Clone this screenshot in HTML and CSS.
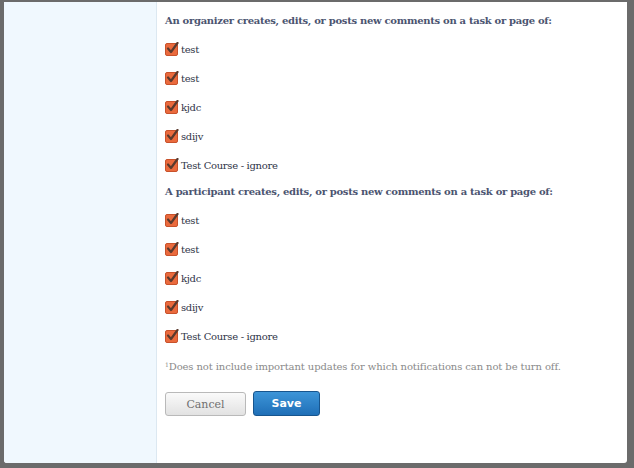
FILE: index.html
```html
<!DOCTYPE html>
<html>
<head>
<meta charset="utf-8">
<link rel="stylesheet" href="styles.css">
</head>
<body>
<div class="frame">
  <aside class="sidebar"></aside>
  <main class="content">
    <h3 class="heading">An organizer creates, edits, or posts new comments on a task or page of:</h3>
    <ul class="list">
      <li class="row"><span class="box"><svg viewBox="0 0 14 14" width="14" height="14"><path d="M3 6.5 L6 10 L12.5 1" fill="none" stroke="#5a3a2e" stroke-width="2.2" stroke-linecap="round" stroke-linejoin="round"/></svg></span><span class="label">test</span></li>
      <li class="row"><span class="box"><svg viewBox="0 0 14 14" width="14" height="14"><path d="M3 6.5 L6 10 L12.5 1" fill="none" stroke="#5a3a2e" stroke-width="2.2" stroke-linecap="round" stroke-linejoin="round"/></svg></span><span class="label">test</span></li>
      <li class="row"><span class="box"><svg viewBox="0 0 14 14" width="14" height="14"><path d="M3 6.5 L6 10 L12.5 1" fill="none" stroke="#5a3a2e" stroke-width="2.2" stroke-linecap="round" stroke-linejoin="round"/></svg></span><span class="label">kjdc</span></li>
      <li class="row"><span class="box"><svg viewBox="0 0 14 14" width="14" height="14"><path d="M3 6.5 L6 10 L12.5 1" fill="none" stroke="#5a3a2e" stroke-width="2.2" stroke-linecap="round" stroke-linejoin="round"/></svg></span><span class="label">sdijv</span></li>
      <li class="row"><span class="box"><svg viewBox="0 0 14 14" width="14" height="14"><path d="M3 6.5 L6 10 L12.5 1" fill="none" stroke="#5a3a2e" stroke-width="2.2" stroke-linecap="round" stroke-linejoin="round"/></svg></span><span class="label">Test Course - ignore</span></li>
    </ul>
    <h3 class="heading">A participant creates, edits, or posts new comments on a task or page of:</h3>
    <ul class="list">
      <li class="row"><span class="box"><svg viewBox="0 0 14 14" width="14" height="14"><path d="M3 6.5 L6 10 L12.5 1" fill="none" stroke="#5a3a2e" stroke-width="2.2" stroke-linecap="round" stroke-linejoin="round"/></svg></span><span class="label">test</span></li>
      <li class="row"><span class="box"><svg viewBox="0 0 14 14" width="14" height="14"><path d="M3 6.5 L6 10 L12.5 1" fill="none" stroke="#5a3a2e" stroke-width="2.2" stroke-linecap="round" stroke-linejoin="round"/></svg></span><span class="label">test</span></li>
      <li class="row"><span class="box"><svg viewBox="0 0 14 14" width="14" height="14"><path d="M3 6.5 L6 10 L12.5 1" fill="none" stroke="#5a3a2e" stroke-width="2.2" stroke-linecap="round" stroke-linejoin="round"/></svg></span><span class="label">kjdc</span></li>
      <li class="row"><span class="box"><svg viewBox="0 0 14 14" width="14" height="14"><path d="M3 6.5 L6 10 L12.5 1" fill="none" stroke="#5a3a2e" stroke-width="2.2" stroke-linecap="round" stroke-linejoin="round"/></svg></span><span class="label">sdijv</span></li>
      <li class="row"><span class="box"><svg viewBox="0 0 14 14" width="14" height="14"><path d="M3 6.5 L6 10 L12.5 1" fill="none" stroke="#5a3a2e" stroke-width="2.2" stroke-linecap="round" stroke-linejoin="round"/></svg></span><span class="label">Test Course - ignore</span></li>
    </ul>
    <p class="note"><sup>1</sup>Does not include important updates for which notifications can not be turn off.</p>
    <div class="actions">
      <button class="btn cancel">Cancel</button>
      <button class="btn save">Save</button>
    </div>
  </main>
</div>
</body>
</html>
```
FILE: styles.css
```css
html, body {
  margin: 0;
  padding: 0;
  background: #6b6b6b;
  width: 634px;
  height: 468px;
  overflow: hidden;
}
.frame {
  margin: 2px 7px 0 4px;
  height: 461px;
  background: #fff;
  display: flex;
  border-radius: 0 0 3px 3px;
  overflow: hidden;
}
.sidebar {
  width: 152px;
  background: #f0f8fe;
  border-right: 1px solid #dce8f1;
  flex: none;
}
.content {
  flex: 1;
  padding: 7px 0 0 8px;
  font-family: "DejaVu Serif", serif;
  color: #3b4055;
}
.heading {
  margin: 0;
  font-size: 10px;
  font-weight: bold;
  color: #4b5470;
  height: 26px;
  box-sizing: border-box;
  padding-top: 4px;
  line-height: 15px;
  letter-spacing: -0.3px;
}
.list {
  list-style: none;
  margin: 0;
  padding: 0;
}
.row {
  display: flex;
  align-items: center;
  height: 29px;
  font-size: 10px;
  letter-spacing: -0.3px;
}
.box {
  width: 13px;
  height: 13px;
  background: #ea6a3d;
  border: 1px solid #c8522b;
  border-radius: 2px;
  box-sizing: border-box;
  position: relative;
  margin-right: 3px;
  flex: none;
}
.box svg {
  position: absolute;
  left: -1px;
  top: -2px;
}
.label {
  color: #2f3447;
}
.note {
  margin: 9px 0 0;
  height: 14px;
  line-height: 14px;
  font-size: 10px;
  color: #8a8a8a;
  letter-spacing: -0.1px;
}
.note sup {
  font-size: 6px;
  vertical-align: top;
  line-height: 10px;
}
.actions {
  display: flex;
  gap: 7px;
  margin-top: 17px;
}
.btn {
  height: 25px;
  border-radius: 3px;
  font-size: 11px;
  padding: 0;
}
.cancel {
  width: 81px;
  margin-top: 1px;
  height: 24px;
  font-family: "DejaVu Serif", serif;
  color: #6f6f6f;
  background: linear-gradient(#fafafa, #e2e2e2);
  border: 1px solid #b9b9b9;
}
.save {
  width: 67px;
  font-family: "DejaVu Sans", sans-serif;
  font-weight: bold;
  color: #fff;
  background: linear-gradient(#3d95d8, #1f6fb7);
  border: 1px solid #17558e;
}
```
